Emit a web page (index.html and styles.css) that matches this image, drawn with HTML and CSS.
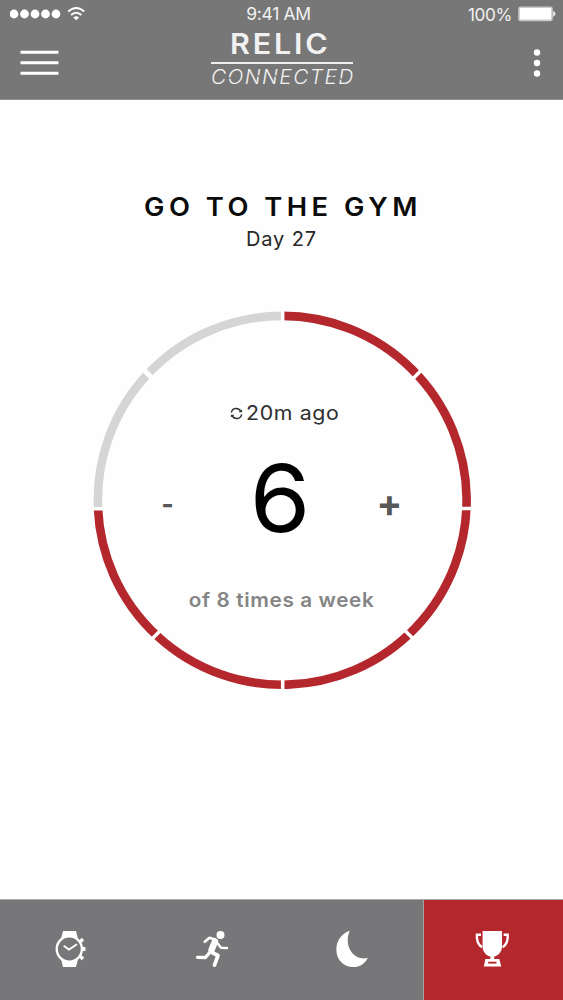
FILE: index.html
```html
<!DOCTYPE html>
<html lang="en">
<head>
<meta charset="utf-8">
<title>Relic Connected</title>
<link rel="stylesheet" href="styles.css">
</head>
<body>
<div class="app">
  <header class="header">
    <div class="status">
      <div class="signal">
        <svg width="80" height="20" viewBox="0 0 80 20" fill="#fff">
          <circle cx="4" cy="10" r="4.4"/><circle cx="14.5" cy="10" r="4.4"/><circle cx="25" cy="10" r="4.4"/><circle cx="35.5" cy="10" r="4.4"/><circle cx="46" cy="10" r="4.4"/>
          <g fill="none" stroke="#fff" stroke-width="2"><path d="M58.2 7.6Q66.2 0.4 74.2 7.6"/><path d="M61 11Q66.2 6.4 71.4 11"/></g>
          <path d="M63.3 13.4Q66.2 11 69.1 13.4L66.2 16.3Z"/>
        </svg>
      </div>
      <div class="clock">9:41 AM</div>
      <div class="power"><span>100%</span>
        <svg width="38" height="16" viewBox="0 0 38 16"><rect x="1" y="1.2" width="33" height="13.2" rx="1.5" fill="#fff" stroke="#c9c9c9" stroke-width="1.6"/><path d="M35.5 5.3Q39 7.8 35.5 10.4Z" fill="#eee" stroke="#eee" stroke-width=".6"/></svg>
      </div>
    </div>
    <div class="bar">
      <svg class="menu" width="39" height="26" viewBox="0 0 39 26" stroke="#fff" stroke-width="3"><path d="M.5 2.3H38.5M.5 12.8H38.5M.5 23.3H38.5"/></svg>
      <div class="brand">
        <div class="relic">RELIC</div>
        <div class="rule"></div>
        <div class="connected"><span class="word">CONNECTED</span>
          <svg class="cuts" width="144" height="18" viewBox="0 0 144 18" stroke="#777" stroke-width="1.4"><path d="M14 9H20M22 13L28 10M45 5L52 11M62 5L69 11M77 10L82 5M118 10L123 5M125 5L132 12"/></svg>
        </div>
      </div>
      <svg class="more" width="8" height="28" viewBox="0 0 8 28" fill="#fff"><circle cx="4" cy="3.5" r="3.2"/><circle cx="4" cy="14" r="3.2"/><circle cx="4" cy="24.5" r="3.2"/></svg>
    </div>
  </header>

  <main class="main">
    <h1 class="title">GO TO THE GYM</h1>
    <div class="day">Day 27</div>
    <section class="dial">
      <svg class="ring" width="380" height="380" viewBox="92 310 380 380" fill="none">
        <path d="M282.5 315.9A184.4 184.4 0 1 1 98 508.8" stroke="#b4272d" stroke-width="8.6"/>
        <path d="M98 508.8A184.4 184.4 0 0 1 282.5 315.9" stroke="#d5d5d5" stroke-width="8.6"/>
        <g stroke="#fefefe" stroke-width="3.5">
          <path d="M282.7 306V324M282.7 676V694M462 508.4H476M88 508.8H106"/>
          <path d="M410.3 381.3L424.3 367.3M401.7 627.3L415.7 641.3M163.7 627.3L149.7 641.3"/>
          <path d="M155.3 381.3L141.3 367.3" stroke-width="5"/>
        </g>
      </svg>
      <div class="reading">
        <div class="synced">
          <svg width="13" height="13" viewBox="0 0 13 13" fill="none" stroke="#333" stroke-width="1.4"><path d="M1.4 5.6C2.2 .4 9 .2 11 4.6M11.6 7.4C10.8 12.6 4 12.8 2 8.4"/><path d="M9 4.8H11.6V3M4 8.2H1.4V10" stroke-width="1.1"/></svg>
          <span class="ago">20m ago</span>
        </div>
        <div class="counter">
          <span class="step minus">-</span>
          <span class="count">6</span>
          <span class="step plus">+</span>
        </div>
        <div class="goal">of 8 times a week</div>
      </div>
    </section>
  </main>

  <nav class="tabs">
    <div class="tab">
      <svg width="34" height="40" viewBox="0 0 34 40"><path d="M10 2H23L25 10H8ZM8 30H25L23 38H10Z" fill="#fff"/><path d="M27.4 10.2L29.8 12.6M28 20H32.4M27.4 29.8L29.8 27.4" stroke="#fff" stroke-width="3.8"/><circle cx="16.3" cy="20" r="12.6" fill="#777678" stroke="#fff" stroke-width="2.3"/><path d="M10.7 16.8L16 20.5L24 15.3" fill="none" stroke="#fff" stroke-width="1.9"/></svg>
    </div>
    <div class="tab">
      <svg width="36" height="40" viewBox="0 0 36 40" fill="none" stroke="#fff" stroke-linecap="round" stroke-linejoin="round"><circle cx="27.5" cy="6" r="4" fill="#fff" stroke="none"/><path d="M11.8 12.7L16.5 8.8L22 10.5" stroke-width="2.7"/><path d="M22 12.5L18.5 21" stroke-width="6.4"/><path d="M24.5 14.2L28 18.8L34 19" stroke-width="2.5"/><path d="M18 23L25 26.5L21.5 36.2" stroke-width="3.7"/><path d="M16.2 24L12.5 28.5L4.5 28.3" stroke-width="3.3"/></svg>
    </div>
    <div class="tab moon">
      <svg width="36" height="40" viewBox="0 0 36 40" fill="#fff"><path d="M16.8 1.8C-2.5 8 -.8 37.6 20.3 38.1C26.8 38 32 34.5 34.8 28.9C20 32.4 10.2 16 16.8 1.8Z"/></svg>
    </div>
    <div class="tab active">
      <svg width="36" height="40" viewBox="0 0 36 40" fill="#fff"><path d="M8.6 2H28V18C28 23 23.5 27.2 20.2 27.5V30H25.3L27.3 37.6H9.8L11.4 30H16.4V27.5C13 27.2 8.6 23 8.6 18Z"/><path d="M7 5.7H2.9C2.6 11.5 3.5 15.5 8 18.2M29.6 5.7H33.7C34 11.5 33 15.5 28.6 18.2" fill="none" stroke="#fff" stroke-width="2.4"/><path d="M14.2 32.7H22.5V34.6H14.2Z" fill="#b4272d"/></svg>
    </div>
  </nav>
</div>
</body>
</html>
```
FILE: styles.css
```css
* { box-sizing: border-box; }
body { margin: 0; background: #fff; }
.app { width: 563px; height: 1000px; display: flex; flex-direction: column; overflow: hidden; font-family: Inter, "Liberation Sans", sans-serif; background: #fefefe; }
svg { display: block; flex: none; }

.header { height: 100px; background: #777; color: #f1f1f1; flex: none; border-bottom: 1px solid #909090; }
.status { height: 28px; display: grid; grid-template-columns: 1fr auto 1fr; align-items: center; padding: 0 7px 0 10px; }
.clock { font-size: 17.5px; letter-spacing: -.35px; line-height: 28px; margin-left: -9px; }
.power { display: flex; justify-content: flex-end; align-items: center; gap: 6px; font-size: 17.2px; letter-spacing: -.4px; }
.bar { height: 71px; display: grid; grid-template-columns: 191px 1fr 8px; align-items: start; padding: 0 22px 0 20px; }
.menu { margin-top: 22px; }
.more { margin-top: 21px; }
.brand { width: 142px; }
.relic { font-size: 28.5px; font-weight: 600; line-height: 32px; letter-spacing: 2.6px; padding-left: 19px; white-space: nowrap; transform: scaleX(1.07); transform-origin: 19px 50%; }
.rule { height: 2px; background: #eee; margin-top: 2px; }
.connected { position: relative; font-size: 20px; font-weight: 300; font-style: italic; line-height: 24px; letter-spacing: 1.4px; margin-top: 1px; white-space: nowrap; }
.word { display: inline-block; transform: scaleX(1.04); transform-origin: 0 50%; }
.cuts { position: absolute; left: 0; top: 4px; }

.main { flex: 1; display: flex; flex-direction: column; align-items: center; color: #0b0b0b; }
.title { margin: 91px 0 0; font-size: 25.5px; line-height: 32px; font-weight: 600; letter-spacing: 4.2px; padding-left: 2px; white-space: nowrap; transform: scaleX(1.07); }
.day { font-size: 20px; line-height: 26px; margin-top: 3px; color: #272727; letter-spacing: .9px; }
.dial { display: grid; width: 380px; height: 380px; margin-top: 58px; }
.ring, .reading { grid-area: 1 / 1; }
.reading { display: flex; flex-direction: column; align-items: center; padding-top: 90px; }
.synced { display: flex; align-items: center; gap: 3px; font-size: 20px; line-height: 26px; color: #2d2d2d; letter-spacing: .6px; }
.ago { transform: scaleX(1.065); transform-origin: 0 50%; }
.counter { display: grid; grid-template-columns: 60px 1fr 60px; align-items: center; width: 282px; height: 126px; margin-top: 9px; text-align: center; }
.count { font-size: 94px; line-height: 126px; color: #000; margin-left: -4px; transform: scaleX(1.04); }
.step { font-weight: 700; color: #58585a; line-height: 40px; }
.minus { font-size: 27px; padding-top: 14px; margin-left: -6px; }
.plus { font-size: 38px; padding-top: 10px; margin-left: -6px; }
.goal { font-size: 20px; line-height: 26px; font-weight: 600; color: #858585; letter-spacing: .6px; margin-top: 26px; white-space: nowrap; transform: scaleX(1.035); }

.tabs { height: 101px; flex: none; display: grid; grid-template-columns: 141px 142px 141px 139px; background: #777678; border-top: 1px solid #aaa; }
.tab { display: flex; align-items: center; justify-content: center; padding: 0 2px 2px 0; }
.moon { padding-right: 6px; }
.active { background: #b4272d; box-shadow: -1px 0 0 #a8a0a0; padding-right: 4px; }
```
